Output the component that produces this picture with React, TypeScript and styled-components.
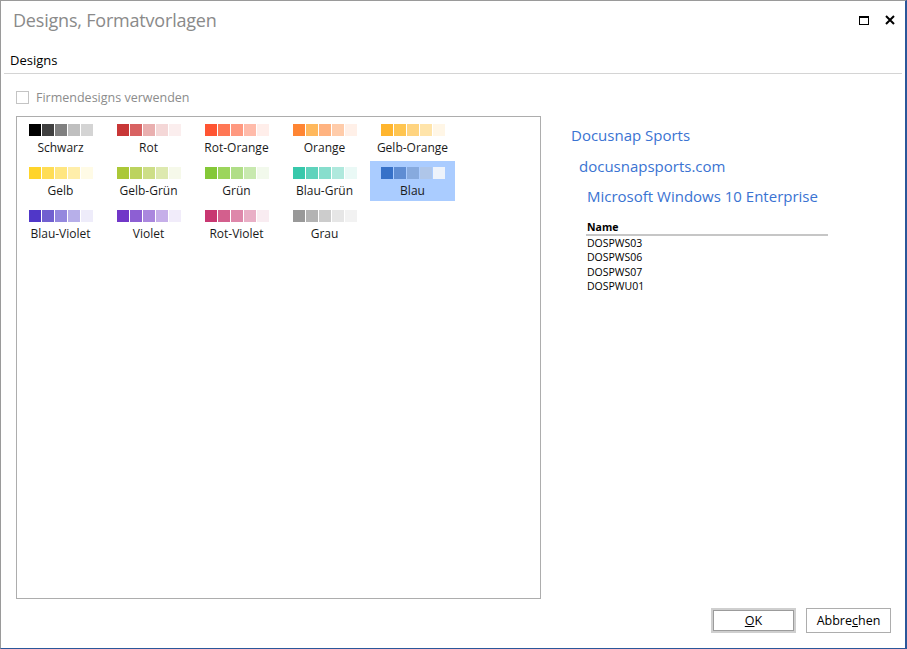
import React from 'react';
import styled, { createGlobalStyle } from 'styled-components';

const GlobalStyle = createGlobalStyle`
    html, body {
        margin: 0;
        padding: 0;
        background: #ffffff;
    }
    body {
        font-family: "Open Sans", "Noto Sans", "Liberation Sans", sans-serif;
    }
`

const Window = styled.div`
    width: 907px;
    height: 649px;
    box-sizing: border-box;
    border-top: 1px solid #9a9a9a;
    border-left: 1px solid #9a9a9a;
    border-right: 2px solid #2b579a;
    border-bottom: 1px solid #2b579a;
    display: flex;
    flex-direction: column;
    background: #fff;
`
const TitleBar = styled.div`
    display: flex;
    align-items: center;
    justify-content: space-between;
    height: 38px;
    padding: 0 10px 0 12px;
`
const Title = styled.h1`
    margin: 0;
    font-size: 18px;
    font-weight: 400;
    color: #8a8a8a;
    letter-spacing: -0.2px;
`
const WindowButtons = styled.div`
    display: flex;
    align-items: center;
    gap: 16px;
`
const SectionHead = styled.div`
    margin: 12px 3px 0 3px;
    padding: 0 0 4px 6px;
    font-size: 13px;
    color: #000;
    border-bottom: 1px solid #d4d4d4;
`
const CheckRow = styled.label`
    display: flex;
    align-items: center;
    gap: 7px;
    margin: 15px 0 0 15px;
    font-size: 12.5px;
    color: #8c8c8c;
`
const CheckBox = styled.span`
    width: 11px;
    height: 11px;
    border: 1px solid #c4c4c4;
    background: #fff;
`
const Body = styled.div`
    display: flex;
    flex: 1;
    margin: 10px 0 0 15px;
`
const DesignBox = styled.div`
    width: 525px;
    height: 483px;
    box-sizing: border-box;
    border: 1px solid #adadad;
    padding: 1px;
    display: grid;
    grid-template-columns: repeat(5, 85px);
    grid-auto-rows: 40px;
    column-gap: 3px;
    row-gap: 3px;
    align-content: start;
`
const Tile = styled.div<{ $selected?: boolean }>`
    display: flex;
    flex-direction: column;
    align-items: center;
    background: ${p => (p.$selected ? '#aaccff' : 'transparent')};
    padding-top: 6px;
    box-sizing: border-box;
`
const Swatches = styled.div`
    display: flex;
    gap: 1px;
`
const Swatch = styled.span<{ $c: string }>`
    width: 12px;
    height: 12px;
    background: ${p => p.$c};
`
const TileLabel = styled.span`
    margin-top: 3px;
    font-size: 12px;
    color: #1a1a1a;
    line-height: 17px;
`
const Preview = styled.div`
    margin-left: 30px;
    padding-top: 9px;
    display: flex;
    flex-direction: column;
`
const Heading = styled.div<{ $indent: number }>`
    margin-left: ${p => p.$indent}px;
    font-size: 15px;
    color: #3a73d2;
    line-height: 20px;
    margin-bottom: 10.5px;
`
const Table = styled.div`
    margin-left: 15px;
    width: 242px;
    margin-top: 3px;
`
const TableHead = styled.div`
    font-size: 10.5px;
    font-weight: 700;
    color: #000;
    border-bottom: 2px solid #c6c6c6;
    padding-left: 1px;
    line-height: 14px;
`
const TableRow = styled.div`
    font-size: 10.5px;
    color: #000;
    line-height: 14.6px;
    padding-left: 1px;
`
const Footer = styled.div`
    display: flex;
    justify-content: flex-end;
    gap: 10px;
    padding: 0 14px 15px 0;
`
const Button = styled.button<{ $default?: boolean }>`
    width: 85px;
    height: 25px;
    box-sizing: border-box;
    background: #fff;
    border: ${p => (p.$default ? '2px solid #cfcfcf' : '1px solid #adadad')};
    outline: ${p => (p.$default ? '1px solid #9c9c9c' : 'none')};
    outline-offset: -3px;
    font-family: inherit;
    font-size: 12.5px;
    color: #000;
    padding: 0;
    u { text-decoration: underline; }
`

const designs: { name: string; colors: string[] }[] = [
    { name: 'Schwarz', colors: ['#000000', '#404040', '#808080', '#bfbfbf', '#d4d4d4'] },
    { name: 'Rot', colors: ['#c83737', '#d86262', '#e9afaf', '#f4d7d7', '#fbeeee'] },
    { name: 'Rot-Orange', colors: ['#ff5533', '#ff7755', '#ff9980', '#ffbbaa', '#ffeeea'] },
    { name: 'Orange', colors: ['#ff8533', '#ffb85c', '#ffb380', '#ffccaa', '#fff0e8'] },
    { name: 'Gelb-Orange', colors: ['#ffb52e', '#ffc550', '#ffd480', '#ffe4aa', '#fff6e6'] },
    { name: 'Gelb', colors: ['#ffd42a', '#ffdd55', '#ffe680', '#ffeeaa', '#fffbe6'] },
    { name: 'Gelb-Grün', colors: ['#abc837', '#bcd35f', '#cdde87', '#dde9af', '#f6f9ea'] },
    { name: 'Grün', colors: ['#84c837', '#9cd55c', '#b0de87', '#c8e9af', '#f2f9ec'] },
    { name: 'Blau-Grün', colors: ['#37c8ab', '#5fd3bc', '#87decd', '#afe9dd', '#eaf9f6'] },
    { name: 'Blau', colors: ['#3771c8', '#5f8dd3', '#87aade', '#afc6e9', '#eef3fb'] },
    { name: 'Blau-Violet', colors: ['#5037c8', '#7160d0', '#9488de', '#b7afe9', '#eeecfa'] },
    { name: 'Violet', colors: ['#7137c8', '#8d5fd3', '#aa87de', '#c6afe9', '#f1ecfa'] },
    { name: 'Rot-Violet', colors: ['#c83771', '#d35f8d', '#de87aa', '#e9afc6', '#f9ecf1'] },
    { name: 'Grau', colors: ['#999999', '#b3b3b3', '#cccccc', '#e6e6e6', '#f2f2f2'] },
]

const hosts = ['DOSPWS03', 'DOSPWS06', 'DOSPWS07', 'DOSPWU01']

function App(): JSX.Element {
    return (
        <>
            <GlobalStyle />
            <Window>
                <TitleBar>
                    <Title>Designs, Formatvorlagen</Title>
                    <WindowButtons>
                        <svg width="10" height="9" viewBox="0 0 10 9">
                            <rect x="0.5" y="0.5" width="9" height="8" fill="none" stroke="#000" />
                            <rect x="0" y="0" width="10" height="2" fill="#000" />
                        </svg>
                        <svg width="10" height="10" viewBox="0 0 10 10">
                            <path d="M1 1 L9 9 M9 1 L1 9" stroke="#000" strokeWidth="2" />
                        </svg>
                    </WindowButtons>
                </TitleBar>
                <SectionHead>Designs</SectionHead>
                <CheckRow>
                    <CheckBox />
                    Firmendesigns verwenden
                </CheckRow>
                <Body>
                    <DesignBox>
                        {designs.map(d => (
                            <Tile key={d.name} $selected={d.name === 'Blau'}>
                                <Swatches>
                                    {d.colors.map((c, i) => (
                                        <Swatch key={i} $c={c} />
                                    ))}
                                </Swatches>
                                <TileLabel>{d.name}</TileLabel>
                            </Tile>
                        ))}
                    </DesignBox>
                    <Preview>
                        <Heading $indent={0}>Docusnap Sports</Heading>
                        <Heading $indent={8}>docusnapsports.com</Heading>
                        <Heading $indent={16}>Microsoft Windows 10 Enterprise</Heading>
                        <Table>
                            <TableHead>Name</TableHead>
                            {hosts.map(h => (
                                <TableRow key={h}>{h}</TableRow>
                            ))}
                        </Table>
                    </Preview>
                </Body>
                <Footer>
                    <Button $default><u>O</u>K</Button>
                    <Button>Abbre<u>c</u>hen</Button>
                </Footer>
            </Window>
        </>
    )
}

export default App;
